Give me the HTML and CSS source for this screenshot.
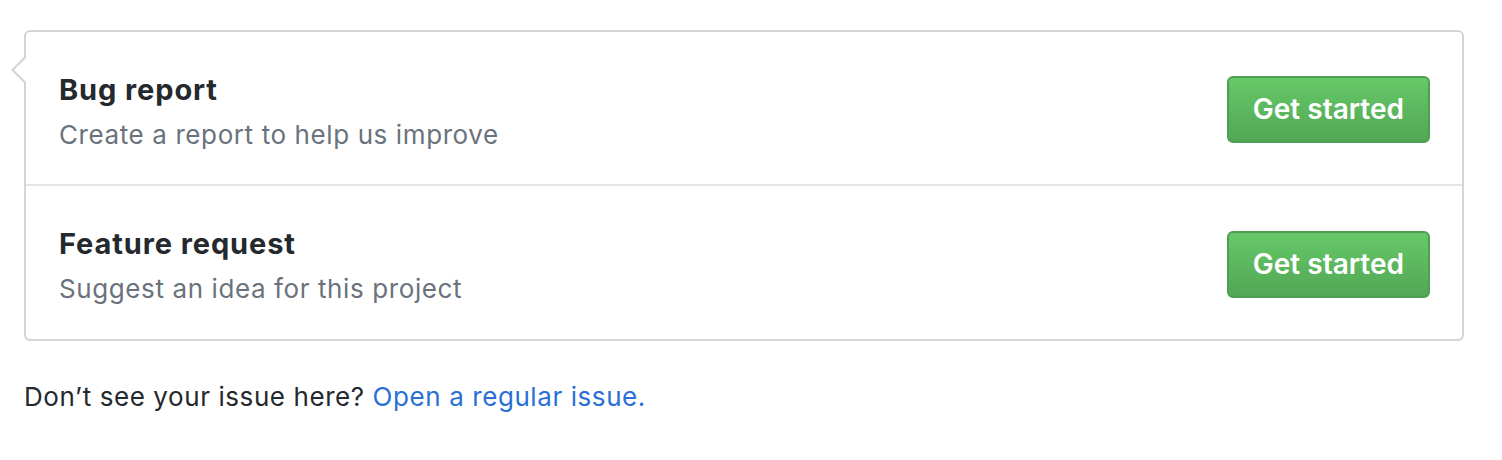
FILE: index.html
```html
<!DOCTYPE html>
<html>
<head>
<meta charset="utf-8">
<link rel="stylesheet" href="styles.css">
</head>
<body>
<div class="page">
  <div class="box">
    <div class="row">
      <div class="info">
        <div class="title">Bug report</div>
        <div class="desc">Create a report to help us improve</div>
      </div>
      <a class="btn" href="#">Get started</a>
    </div>
    <div class="row">
      <div class="info">
        <div class="title">Feature request</div>
        <div class="desc">Suggest an idea for this project</div>
      </div>
      <a class="btn" href="#">Get started</a>
    </div>
  </div>
  <p class="footer">Don’t see your issue here? <a class="link" href="#">Open a regular issue.</a></p>
</div>
</body>
</html>
```
FILE: styles.css
```css
* { box-sizing: border-box; }
html, body { margin: 0; padding: 0; background: #fff; }
body {
  font-family: Inter, "Noto Sans", "Liberation Sans", sans-serif;
  color: #24292e;
}
.page {
  padding: 30px 38px 0 24px;
}
.box {
  position: relative;
  border: 2px solid #d1d5da;
  border-radius: 6px;
  background: #fff;
}
.box::before,
.box::after {
  content: "";
  position: absolute;
  top: 25px;
  width: 0;
  height: 0;
  border-style: solid;
  border-color: transparent;
}
.box::before {
  left: -15px;
  border-width: 13px 13px 13px 0;
  border-right-color: #d1d5da;
}
.box::after {
  left: -12px;
  border-width: 13px 13px 13px 0;
  border-right-color: #fff;
}
.row {
  display: flex;
  align-items: center;
  justify-content: space-between;
  padding: 3px 32px 0 33px;
  height: 152px;
}
.row + .row {
  border-top: 2px solid #e1e4e8;
  height: 155px;
  padding-top: 3px;
}
.info {
  margin-top: 3px;
}
.title {
  font-size: 29px;
  font-weight: 700;
  letter-spacing: 0.9px;
  line-height: 44px;
  color: #24292e;
}
.desc {
  margin-top: 3px;
  font-size: 26px;
  letter-spacing: 0.6px;
  line-height: 40px;
  color: #6a737d;
}
.btn {
  display: inline-block;
  font-size: 28px;
  font-weight: 600;
  line-height: 39px;
  padding: 12px 24px;
  color: #fff;
  text-decoration: none;
  border: 2px solid #4e9f51;
  border-radius: 6px;
  background: linear-gradient(#66c868, #52a755);
}
.footer {
  margin: 36px 0 0;
  font-size: 26px;
  letter-spacing: 0.58px;
  line-height: 40px;
}
.link {
  color: #2a6fd6;
  text-decoration: none;
}
```
